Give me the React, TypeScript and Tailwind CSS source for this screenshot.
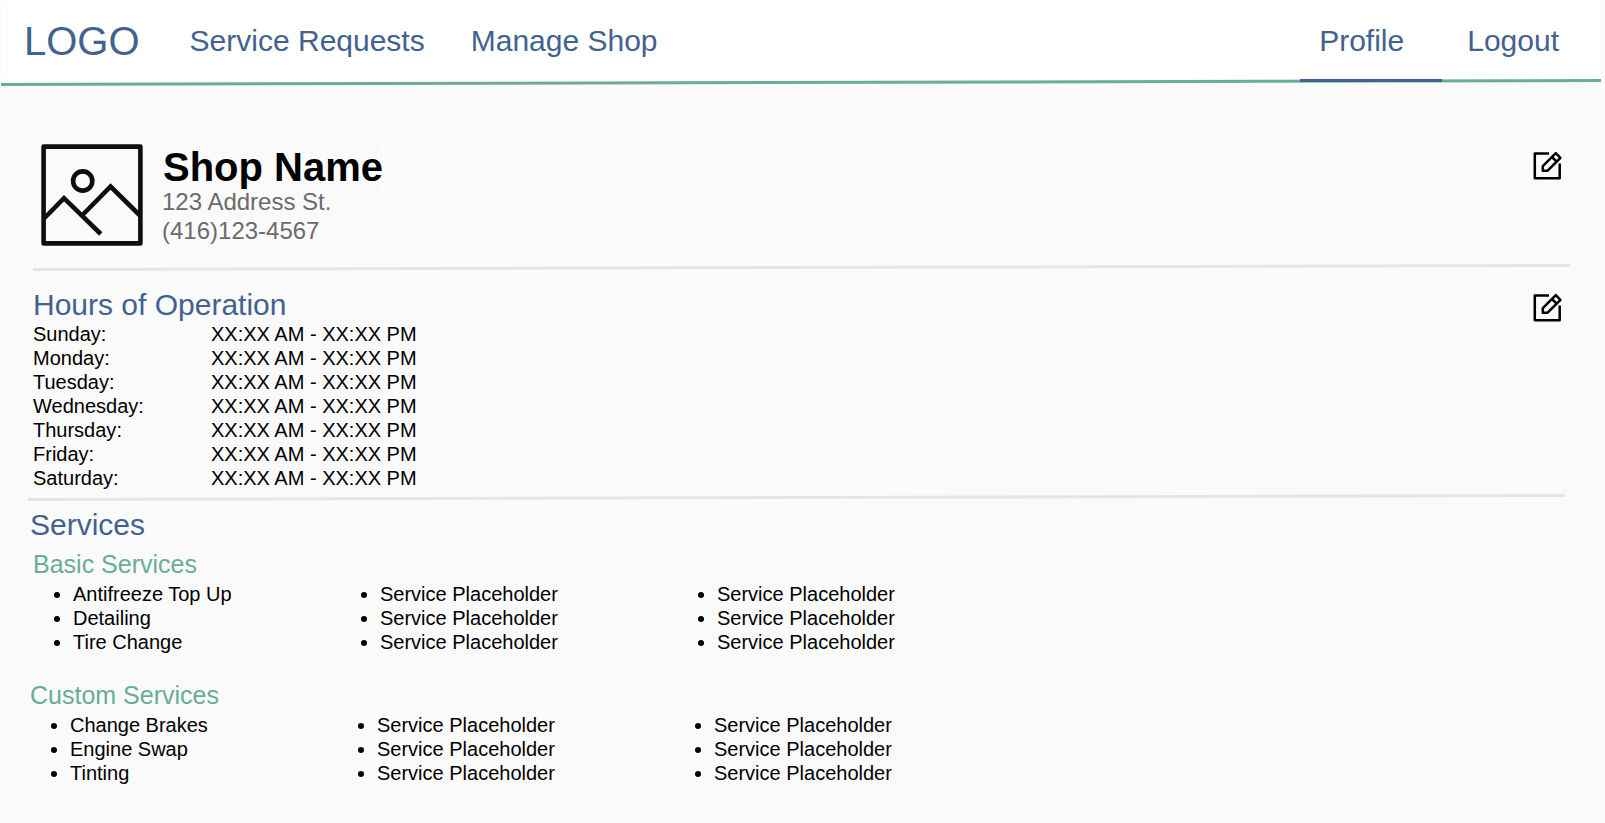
function SlantedRule({ color, className }: { color: string; className: string }) {
  return (
    <svg
      aria-hidden="true"
      className={`block h-2 ${className}`}
      viewBox="0 0 100 8"
      preserveAspectRatio="none"
    >
      <line x1="0" y1="5.5" x2="100" y2="1.5" stroke={color} strokeWidth="3" vectorEffect="non-scaling-stroke" />
    </svg>
  );
}

function EditButton({ label }: { label: string }) {
  return (
    <button type="button" aria-label={label} className="shrink-0 cursor-pointer">
      <svg width="30" height="30" viewBox="0 0 30 30" fill="none" stroke="#000" strokeWidth="2.5" strokeLinejoin="round">
        <path d="M16 2.5H1.8V27.2H26.7V12.6" />
        <path d="M9.8 19.8V15.2L22.8 2.2L27.4 6.8L14.4 19.8Z" />
        <path d="M19 6L23.6 10.6" />
      </svg>
    </button>
  );
}

function ShopImage() {
  return (
    <svg
      role="img"
      aria-label="Shop picture"
      className="shrink-0"
      width="102"
      height="102"
      viewBox="0 0 102 102"
      fill="none"
      stroke="#0d0f0e"
      strokeWidth="4.6"
    >
      <rect x="2.6" y="2.6" width="96.8" height="96.8" strokeLinejoin="round" />
      <circle cx="41.7" cy="37" r="9.6" />
      <path d="M3 74.5L23 54.2L59.8 90" />
      <path d="M41 71.5L69.6 42.5L99 71.5" />
    </svg>
  );
}

const days = ["Sunday", "Monday", "Tuesday", "Wednesday", "Thursday", "Friday", "Saturday"];
const placeholders = ["Service Placeholder", "Service Placeholder", "Service Placeholder"];

function ServiceLists({ first }: { first: string[] }) {
  return (
    <div className="grid grid-cols-[307px_337px_auto] justify-start">
      {[first, placeholders, placeholders].map((items, column) => (
        <ul key={column} className="list-disc pl-10">
          {items.map((item, i) => (
            <li key={i}>{item}</li>
          ))}
        </ul>
      ))}
    </div>
  );
}

export default function App() {
  return (
    <div className="min-h-screen bg-[#fafafa] pt-px pb-8 font-['Liberation_Sans',Arial,sans-serif] text-xl leading-6 text-black">
      <header className="mr-1 ml-px text-[#42628f]">
        <nav className="flex h-[78px] items-stretch bg-white pr-[42px] pl-[23px] text-[30px] leading-9 whitespace-nowrap">
          <a href="#home" className="flex items-center pt-0.5 text-[40px]">LOGO</a>
          <a href="#requests" className="ml-[50px] flex items-center pt-0.5">Service Requests</a>
          <a href="#manage" className="ml-[46px] flex items-center pt-0.5">Manage Shop</a>
          <a
            href="#profile"
            aria-current="page"
            className="relative ml-auto flex items-center pt-0.5 pr-[38px] pl-[19px] after:absolute after:inset-x-0 after:top-full after:h-[3px] after:bg-[#42628f]"
          >
            Profile
          </a>
          <a href="#logout" className="ml-[25px] flex items-center pt-0.5">Logout</a>
        </nav>
        <SlantedRule color="#68ae95" className="w-full" />
      </header>

      <main>
        <section className="flex items-start pt-[55px] pr-[42px] pl-[41px]">
          <div className="mt-0.5">
            <ShopImage />
          </div>
          <div className="ml-[19px]">
            <h1 className="-mb-[5px] border border-white text-[40px] leading-[48px] font-bold">Shop Name</h1>
            <p className="text-2xl leading-[29px] text-[#6b6b6b]">123 Address St.</p>
            <p className="text-2xl leading-[29px] text-[#6b6b6b]">(416)123-4567</p>
          </div>
          <div className="mt-[9px] ml-auto flex">
            <EditButton label="Edit shop details" />
          </div>
        </section>
        <div className="mt-[18px] mr-[35px] ml-[33px]">
          <SlantedRule color="#e5e5e5" className="w-full" />
        </div>

        <section className="mt-[15px] flex items-start justify-between pr-[42px] pl-[33px]">
          <div>
            <h2 className="-mb-px text-[30px] leading-9 text-[#42628f]">Hours of Operation</h2>
            <table>
              <tbody>
                {days.map((day) => (
                  <tr key={day}>
                    <th scope="row" className="w-[178px] p-0 text-left font-normal">{day}:</th>
                    <td className="p-0">XX:XX AM - XX:XX PM</td>
                  </tr>
                ))}
              </tbody>
            </table>
          </div>
          <div className="mt-1.5 flex">
            <EditButton label="Edit hours of operation" />
          </div>
        </section>
        <div className="mt-1 mr-10 ml-7">
          <SlantedRule color="#e5e5e5" className="w-full" />
        </div>

        <section className="mt-[5px] px-[30px]">
          <h2 className="text-[30px] leading-9 text-[#42628f]">Services</h2>
          <div className="mt-1.5 ml-[3px]">
            <h3 className="pb-[3px] text-[25px] leading-[30px] text-[#68ae95]">Basic Services</h3>
            <ServiceLists first={["Antifreeze Top Up", "Detailing", "Tire Change"]} />
          </div>
          <div className="mt-[26px]">
            <h3 className="pb-[3px] text-[25px] leading-[30px] text-[#68ae95]">Custom Services</h3>
            <ServiceLists first={["Change Brakes", "Engine Swap", "Tinting"]} />
          </div>
        </section>
      </main>
    </div>
  );
}
